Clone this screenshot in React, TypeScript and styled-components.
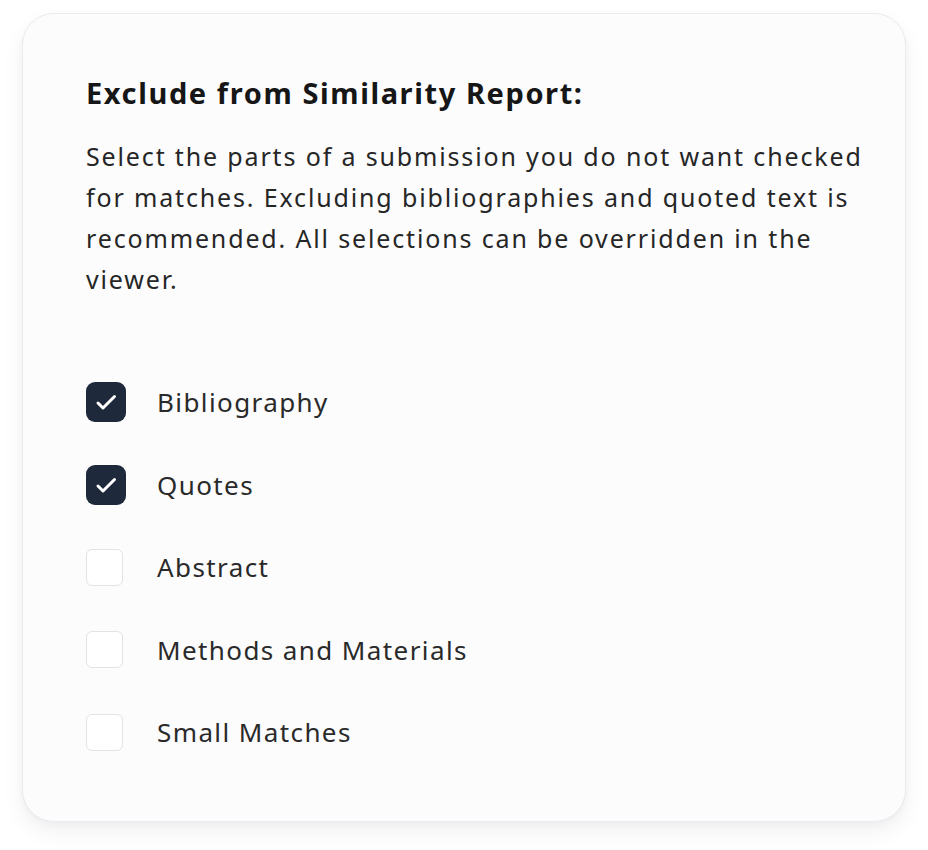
import React, { useState } from "react"
import styled, { createGlobalStyle } from "styled-components"

const GlobalStyle = createGlobalStyle`
    html, body {
        margin: 0;
        padding: 0;
        background: #ffffff;
        font-family: "Noto Sans", "Open Sans", sans-serif;
    }
`

const options = [
    { id: "bibliography", label: "Bibliography", checked: true },
    { id: "quotes", label: "Quotes", checked: true },
    { id: "abstract", label: "Abstract", checked: false },
    { id: "methods", label: "Methods and Materials", checked: false },
    { id: "small", label: "Small Matches", checked: false },
]

const CheckIcon = () => (
    <svg width="40" height="40" viewBox="0 0 40 40" fill="none">
        <path d="M12 21l5 5L28.5 14.5" stroke="#ffffff" strokeWidth="3" strokeLinecap="round" strokeLinejoin="round" />
    </svg>
)

export default function App() {
    const [state, setState] = useState<Record<string, boolean>>(
        Object.fromEntries(options.map((o) => [o.id, o.checked]))
    )

    const toggle = (id: string) => setState((s) => ({ ...s, [id]: !s[id] }))

    return (
        <Page>
            <GlobalStyle />
            <Card>
                <Title>Exclude from Similarity Report:</Title>
                <Description>
                    Select the parts of a submission you do not want checked for matches. Excluding
                    bibliographies and quoted text is recommended. All selections can be overridden in the
                    viewer.
                </Description>
                <OptionList>
                    {options.map((o) => (
                        <Option key={o.id} onClick={() => toggle(o.id)}>
                            <Box $checked={state[o.id]}>{state[o.id] && <CheckIcon />}</Box>
                            <Label>{o.label}</Label>
                        </Option>
                    ))}
                </OptionList>
            </Card>
        </Page>
    )
}

const Page = styled.div`
    width: 928px;
    height: 850px;
    padding: 13px 0 0 22px;
    box-sizing: border-box;
`

const Card = styled.div`
    width: 884px;
    box-sizing: border-box;
    padding: 61px 30px 69px 63px;
    background: #fcfcfd;
    border: 1px solid #ebebf0;
    border-radius: 32px;
    box-shadow: 0 10px 22px rgba(20, 20, 50, 0.06), 0 2px 6px rgba(20, 20, 50, 0.03);
`

const Title = styled.h2`
    margin: 0;
    font-size: 29px;
    line-height: 36px;
    font-weight: 700;
    letter-spacing: 1.6px;
    color: #161616;
`

const Description = styled.p`
    margin: 25px 0 0;
    font-size: 25px;
    line-height: 41px;
    letter-spacing: 1.85px;
    color: #262626;
`

const OptionList = styled.div`
    display: flex;
    flex-direction: column;
    gap: 42.5px;
    margin-top: 82px;
`

const Option = styled.label`
    display: flex;
    align-items: center;
    height: 40px;
    cursor: pointer;
    user-select: none;
`

const Box = styled.span<{ $checked: boolean }>`
    flex: none;
    display: flex;
    align-items: center;
    justify-content: center;
    box-sizing: border-box;
    width: ${(p) => (p.$checked ? "40px" : "37px")};
    height: ${(p) => (p.$checked ? "40px" : "37px")};
    margin-right: ${(p) => (p.$checked ? "31px" : "34px")};
    border-radius: ${(p) => (p.$checked ? "9px" : "6px")};
    background: ${(p) => (p.$checked ? "#1e293b" : "#ffffff")};
    border: ${(p) => (p.$checked ? "none" : "1.5px solid #e2e2e8")};
`

const Label = styled.span`
    font-size: 26px;
    letter-spacing: 1.4px;
    color: #2a2a2a;
`
